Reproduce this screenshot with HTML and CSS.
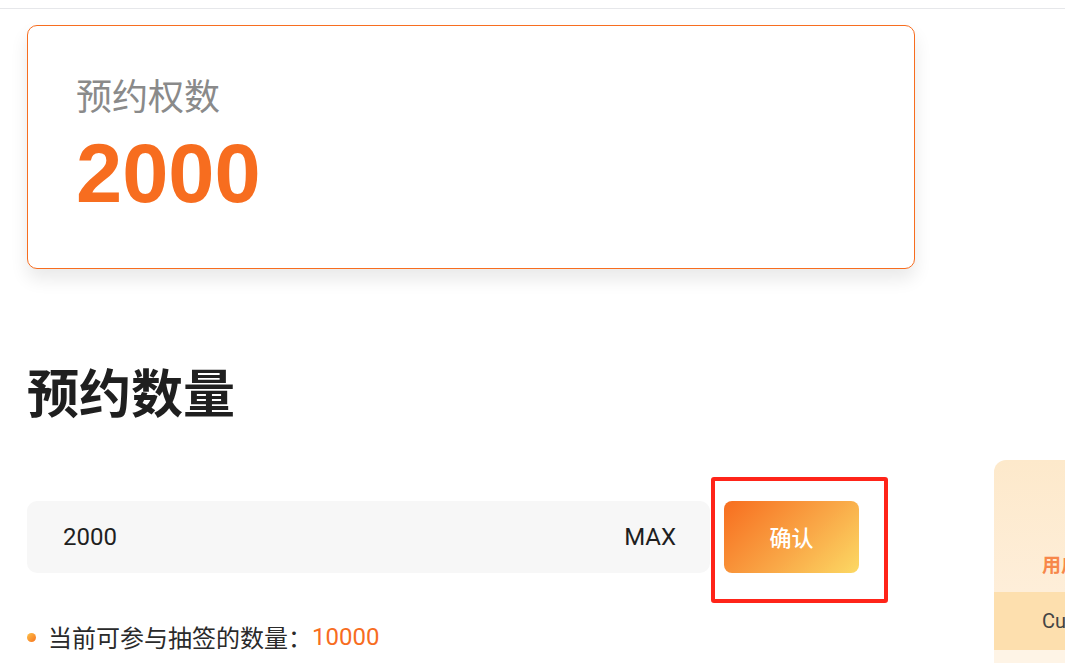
FILE: index.html
```html
<!DOCTYPE html>
<html lang="zh-CN">
<head>
    <meta charset="UTF-8" />
    <meta name="viewport" content="width=device-width, initial-scale=1" />
    <title>预约数量</title>
    <link rel="stylesheet" href="styles.css">
</head>
<body>
    <div class="topbar"></div>

    <div class="layout">
        <div class="main">
            <div class="card">
                <div class="card-label">预约权数</div>
                <div class="card-value">2000</div>
            </div>

            <h2 class="section-title">预约数量</h2>

            <div class="form-row">
                <div class="amount-input">
                    <span class="amount-value">2000</span>
                    <span class="max-link">MAX</span>
                </div>
                <div class="confirm-wrap">
                    <button class="confirm-button">确认</button>
                    <span class="highlight"></span>
                </div>
            </div>

            <ul class="notes">
                <li>当前可参与抽签的数量：<span class="accent">10000</span></li>
            </ul>
        </div>

        <div class="side">
            <div class="side-head">
                <div class="side-title">用户预约记录</div>
            </div>
            <div class="side-row side-row-head">Current</div>
            <div class="side-row"></div>
        </div>
    </div>
</body>
</html>
```

FILE: styles.css
```css
body {
    margin: 0;
    padding: 0;
    font-family: 'Noto Sans CJK SC', 'Noto Sans', sans-serif;
    background: #ffffff;
    color: #222222;
    overflow: hidden;
}

.topbar {
    height: 8px;
    border-bottom: 1px solid #e6e7ea;
}

.layout {
    display: flex;
    gap: 79px;
    padding-left: 27px;
}

.main {
    width: 888px;
    flex-shrink: 0;
}

.card {
    margin-top: 16px;
    height: 244px;
    box-sizing: border-box;
    border: 1px solid #f76d1f;
    border-radius: 10px;
    padding: 43px 48px 0;
    box-shadow: 0 10px 18px rgba(0, 0, 0, 0.09);
    background: #fff;
}

.card-label {
    font-size: 36px;
    line-height: 50px;
    color: #8a8a8a;
}

.card-value {
    margin-top: 7px;
    font-family: 'Liberation Sans', Arial, sans-serif;
    font-weight: 700;
    font-size: 83px;
    line-height: 96px;
    color: #f76d1f;
}

.section-title {
    margin: 87px 0 0;
    font-size: 52px;
    line-height: 70px;
    font-weight: 700;
    color: #1f1f1f;
}

.form-row {
    display: flex;
    gap: 14px;
    margin-top: 75px;
}

.amount-input {
    width: 683px;
    height: 72px;
    box-sizing: border-box;
    display: flex;
    align-items: center;
    justify-content: space-between;
    padding: 0 34px 0 36px;
    background: #f7f7f7;
    border-radius: 10px;
    font-family: Roboto, sans-serif;
    font-size: 24px;
    color: #1f1f1f;
}

.confirm-wrap {
    position: relative;
}

.confirm-button {
    width: 135px;
    height: 72px;
    padding: 0 0 3px;
    border: none;
    border-radius: 8px;
    background: linear-gradient(135deg, #f76d1f, #f9a646 55%, #fcd964);
    color: #ffffff;
    font-family: 'Noto Sans CJK SC', sans-serif;
    font-size: 22px;
    font-weight: 500;
    cursor: pointer;
}

.highlight {
    position: absolute;
    top: -24px;
    left: -13px;
    width: 177px;
    height: 126px;
    box-sizing: border-box;
    border: 4px solid #ff2419;
    border-radius: 3px;
    pointer-events: none;
}

.notes {
    list-style: none;
    margin: 46px 0 0;
    padding: 0;
}

.notes li {
    display: flex;
    align-items: center;
    font-size: 24px;
    line-height: 36px;
    color: #2a2a2a;
}

.notes li::before {
    content: "";
    width: 9px;
    height: 9px;
    border-radius: 50%;
    background: linear-gradient(135deg, #fdc24a, #f7731f);
    margin: 0 12px 0 0;
}

.accent {
    font-family: Roboto, sans-serif;
    color: #f76d1f;
}

.side {
    width: 320px;
    flex-shrink: 0;
    margin-top: 451px;
    border-radius: 12px 12px 0 0;
    overflow: hidden;
}

.side-head {
    height: 132px;
    box-sizing: border-box;
    padding: 90px 0 0 48px;
    background: linear-gradient(180deg, #fde9cb, #feeed9);
}

.side-title {
    font-size: 19px;
    font-weight: 700;
    color: #f7874a;
    line-height: 28px;
}

.side-row {
    height: 58px;
    padding-left: 48px;
    display: flex;
    align-items: center;
    font-family: Roboto, sans-serif;
    font-size: 20px;
    color: #444;
    background: #fef4e6;
}

.side-row-head {
    background: #fddfae;
}
```
